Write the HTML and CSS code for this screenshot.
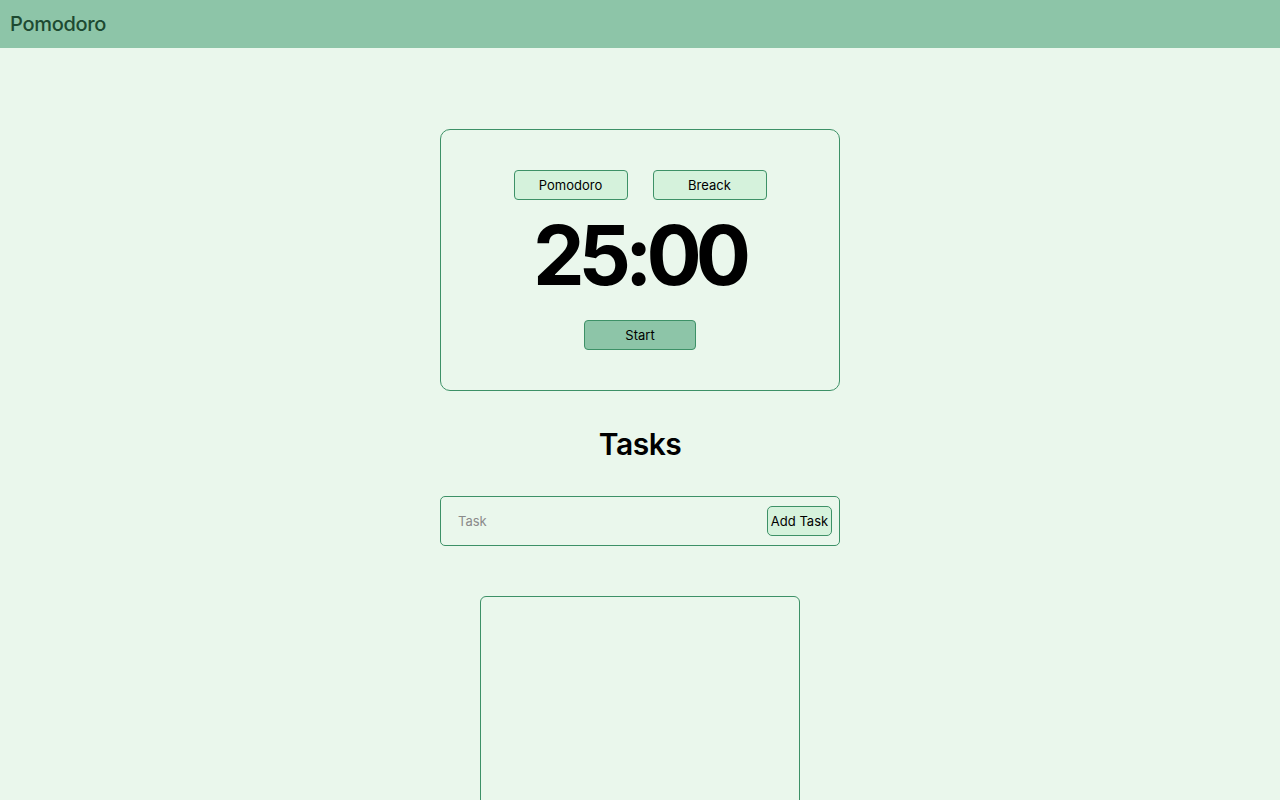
FILE: index.html
```html
<!DOCTYPE html>
<html lang="en">
<head>
<meta charset="utf-8">
<title>Pomodoro</title>
<link rel="stylesheet" href="styles.css">
</head>
<body>
<header class="topbar">
  <h1 class="brand">Pomodoro</h1>
</header>
<main class="main">
  <section class="timer-card">
    <div class="modes">
      <button class="mode-btn">Pomodoro</button>
      <button class="mode-btn">Breack</button>
    </div>
    <div class="time">25:00</div>
    <button class="start-btn">Start</button>
  </section>
  <h2 class="tasks-title">Tasks</h2>
  <form class="task-form">
    <input class="task-input" type="text" placeholder="Task">
    <button class="add-btn" type="button">Add Task</button>
  </form>
  <section class="task-list"></section>
</main>
</body>
</html>
```
FILE: styles.css
```css
* { box-sizing: border-box; }
html, body { margin: 0; padding: 0; }
body {
  background: #eaf7ec;
  font-family: "Inter", "Noto Sans", sans-serif;
  color: #000;
  height: 800px;
  overflow: hidden;
}
.topbar {
  height: 48px;
  background: #8dc5a8;
  display: flex;
  align-items: center;
  padding-left: 10px;
}
.brand {
  margin: 0;
  font-family: "Inter", sans-serif;
  font-weight: 500;
  font-size: 20px;
  color: #1d4a31;
  letter-spacing: -0.3px;
}
.main {
  display: flex;
  flex-direction: column;
  align-items: center;
  padding-top: 81px;
}
.timer-card {
  width: 400px;
  height: 262px;
  border: 1px solid #3d9167;
  border-radius: 10px;
  display: flex;
  flex-direction: column;
  align-items: center;
  padding-top: 40px;
}
.modes {
  display: flex;
  gap: 25px;
}
.mode-btn {
  width: 114px;
  height: 30px;
  background: #d5f2dc;
  border: 1px solid #3d9167;
  border-radius: 4px;
  font-family: "Inter", sans-serif;
  font-size: 13px;
  color: #000;
  padding: 0;
}
.time {
  font-family: "Inter", sans-serif;
  font-weight: 700;
  font-size: 82px;
  line-height: 120px;
  letter-spacing: -6px;
  margin-left: -2px;
  margin-top: -4px;
  margin-bottom: 4px;
}
.start-btn {
  width: 112px;
  height: 30px;
  background: #8dc5a8;
  border: 1px solid #3d9167;
  border-radius: 4px;
  font-family: "Inter", sans-serif;
  font-size: 13px;
  color: #000;
  padding: 0;
}
.tasks-title {
  margin: 34px 0 0;
  font-family: "Inter", sans-serif;
  font-weight: 600;
  font-size: 30px;
  line-height: 38px;
  letter-spacing: -0.5px;
}
.task-form {
  margin-top: 33px;
  width: 400px;
  height: 50px;
  border: 1px solid #3d9167;
  border-radius: 5px;
  display: flex;
  align-items: center;
  padding: 0 7px 0 17px;
}
.task-input {
  flex: 1;
  border: none;
  background: transparent;
  font-family: "Inter", sans-serif;
  font-size: 13px;
  outline: none;
  padding: 0;
}
.task-input::placeholder { color: #8a8a8a; }
.add-btn {
  width: 65px;
  height: 30px;
  background: #d5f2dc;
  border: 1px solid #3d9167;
  border-radius: 5px;
  font-family: "Inter", sans-serif;
  font-size: 13px;
  color: #000;
  padding: 0;
}
.task-list {
  margin-top: 50px;
  width: 320px;
  height: 260px;
  border: 1px solid #3d9167;
  border-radius: 6px;
}
```
